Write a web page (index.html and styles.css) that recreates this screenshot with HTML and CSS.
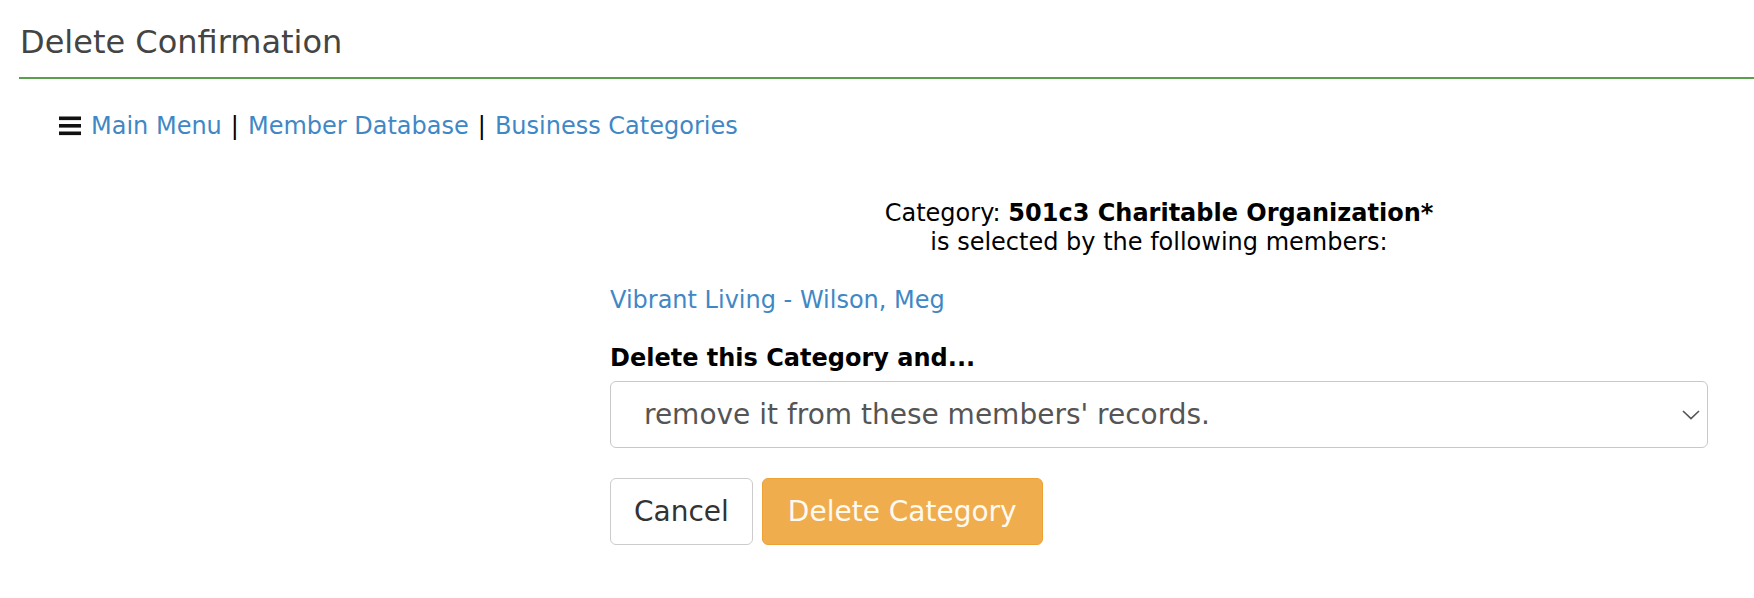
FILE: index.html
```html
<!DOCTYPE html>
<html lang="en">
<head>
<meta charset="utf-8">
<title>Delete Confirmation</title>
<link rel="stylesheet" href="styles.css">
</head>
<body>
<header class="page-header">
  <h1 class="page-title">Delete Confirmation</h1>
</header>
<nav class="crumbs">
  <svg class="hamburger" width="22" height="20" viewBox="0 0 22 20" aria-hidden="true">
    <rect x="0" y="0.5" width="22" height="3.6"/>
    <rect x="0" y="8" width="22" height="3.6"/>
    <rect x="0" y="15.5" width="22" height="3.6"/>
  </svg>
  <a href="#" class="link">Main Menu</a>
  <span class="sep">|</span>
  <a href="#" class="link">Member Database</a>
  <span class="sep">|</span>
  <a href="#" class="link">Business Categories</a>
</nav>
<main class="content">
  <div class="cat-info">
    <div>Category: <b>501c3 Charitable Organization*</b></div>
    <div>is selected by the following members:</div>
  </div>
  <div class="members">
    <a href="#" class="link">Vibrant Living - Wilson, Meg</a>
  </div>
  <form class="del-form">
    <label class="field-label" for="action">Delete this Category and...</label>
    <div class="select-wrap">
      <select id="action" class="select">
        <option>remove it from these members' records.</option>
      </select>
      <svg class="chevron" width="18" height="10" viewBox="0 0 18 10" aria-hidden="true">
        <path d="M1 1 L9 8.6 L17 1" fill="none" stroke="#555" stroke-width="1.6"/>
      </svg>
    </div>
    <div class="actions">
      <button type="button" class="btn btn-default">Cancel</button>
      <button type="submit" class="btn btn-warning">Delete Category</button>
    </div>
  </form>
</main>
</body>
</html>
```
FILE: styles.css
```css
html, body {
  background: #fff;
}
body {
  margin: 0;
  font-family: "DejaVu Sans", Verdana, sans-serif;
  font-size: 24px;
  color: #000;
}
.page-header {
  margin-left: 19px;
  padding: 22px 0 15px 1px;
  border-bottom: 2px solid #5a9f4c;
}
.page-title {
  margin: 0;
  font-size: 32px;
  line-height: 40px;
  font-weight: normal;
  color: #444;
}
.crumbs {
  display: flex;
  align-items: center;
  margin: 31px 0 0 59px;
  line-height: 32px;
  white-space: pre;
}
.hamburger {
  fill: #111;
  margin-right: 10px;
}
.link {
  color: #3f88c5;
  text-decoration: none;
}
.sep {
  color: #000;
  padding: 0 9px;
}
.content {
  margin: 57px 0 0 610px;
  width: 1098px;
}
.cat-info {
  text-align: center;
  line-height: 29px;
}
.members {
  margin-top: 29px;
  line-height: 29px;
}
.del-form {
  margin: 29px 0 0;
}
.field-label {
  display: block;
  font-weight: bold;
  line-height: 29px;
}
.select-wrap {
  position: relative;
  margin-top: 8px;
}
.select {
  display: block;
  width: 100%;
  height: 67px;
  box-sizing: border-box;
  appearance: none;
  -webkit-appearance: none;
  background: #fff;
  border: 1px solid #c8c8c8;
  border-radius: 6px;
  padding: 0 40px 0 33px;
  font-family: inherit;
  font-size: 28px;
  color: #555;
}
.chevron {
  position: absolute;
  right: 8px;
  top: 29px;
}
.actions {
  display: flex;
  gap: 9px;
  margin-top: 30px;
}
.btn {
  height: 67px;
  box-sizing: border-box;
  padding: 0 25px;
  font-family: inherit;
  font-size: 28px;
  border-radius: 6px;
  border: 1px solid #ccc;
  cursor: pointer;
}
.btn-default {
  background: #fff;
  color: #333;
  padding: 0 23px;
}
.btn-warning {
  background: #f0ad4e;
  border-color: #eea236;
  color: #fffaf0;
}
```
